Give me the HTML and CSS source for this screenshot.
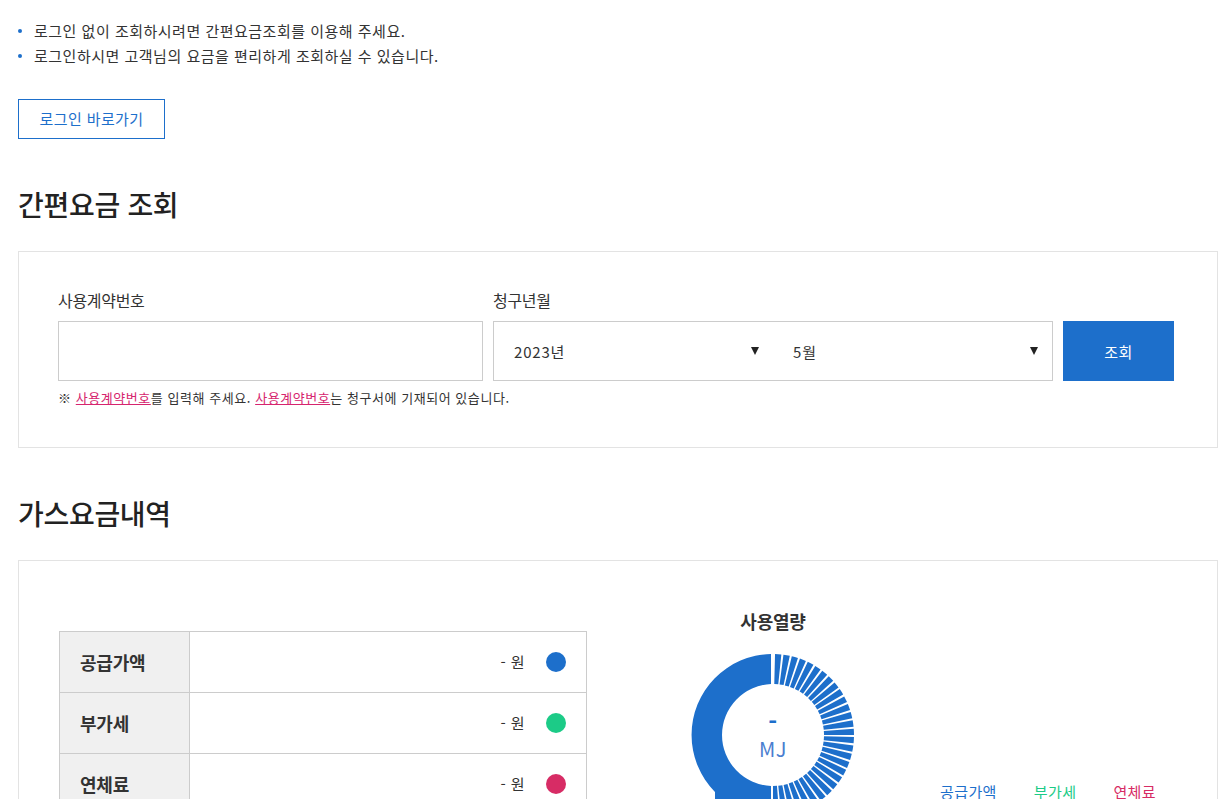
FILE: index.html
```html
<!DOCTYPE html>
<html lang="ko">
<head>
<meta charset="utf-8">
<title>간편요금 조회</title>
<link rel="stylesheet" href="styles.css">
</head>
<body>
<div class="page">
  <ul class="notice">
    <li>로그인 없이 조회하시려면 간편요금조회를 이용해 주세요.</li>
    <li>로그인하시면 고객님의 요금을 편리하게 조회하실 수 있습니다.</li>
  </ul>
  <a class="btn-outline" href="#">로그인 바로가기</a>

  <h2 class="sec-title">간편요금 조회</h2>
  <div class="box search-box">
    <div class="search-grid">
      <label class="field-label">사용계약번호</label>
      <label class="field-label">청구년월</label>
      <span></span>
      <input class="text-input" type="text">
      <div class="select-group">
        <div class="select"><span>2023년</span><i class="caret"></i></div>
        <div class="select"><span>5월</span><i class="caret"></i></div>
      </div>
      <button class="btn-primary" type="button">조회</button>
      <p class="note">※ <a href="#">사용계약번호</a>를 입력해 주세요. <a href="#">사용계약번호</a>는 청구서에 기재되어 있습니다.</p>
    </div>
  </div>

  <h2 class="sec-title">가스요금내역</h2>
  <div class="box result-box">
    <table class="fee-table">
      <tr><th>공급가액</th><td>- 원<span class="dot dot-blue"></span></td></tr>
      <tr><th>부가세</th><td>- 원<span class="dot dot-green"></span></td></tr>
      <tr><th>연체료</th><td>- 원<span class="dot dot-pink"></span></td></tr>
    </table>
    <div class="chart">
      <p class="chart-title">사용열량</p>
      <div class="donut">
        <svg width="200" height="200" viewBox="0 0 200 200">
          <path fill="#1d6fcb" d="M98 21 A81 81 0 0 0 98 182.97 L98 152.96 A51 51 0 0 1 98 51.04 Z"/>
          <rect x="42" y="157" width="56" height="43" fill="#1d6fcb"/>
          <path fill="none" stroke="#1d6fcb" stroke-width="30" stroke-dasharray="5.2 1.7" stroke-dashoffset="5.2" d="M100 36 A66 66 0 0 1 100 168"/>
        </svg>
        <div class="donut-label">
          <span class="donut-value">-</span>
          <span class="donut-unit">MJ</span>
        </div>
      </div>
    </div>
    <ul class="legend">
      <li class="lg-blue">공급가액</li>
      <li class="lg-green">부가세</li>
      <li class="lg-pink">연체료</li>
    </ul>
  </div>
</div>
</body>
</html>
```

FILE: styles.css
```css
* { box-sizing: border-box; }

body {
  margin: 0;
  font-family: "Noto Sans CJK KR", "Noto Sans", sans-serif;
  color: #333;
  background: #fff;
  letter-spacing: 0.5px;
}

.page {
  width: 1218px;
  padding: 18px 0 0 18px;
}

.notice {
  list-style: none;
  margin: 0;
  padding: 0;
}
.notice li {
  position: relative;
  padding-left: 16px;
  font-size: 15px;
  line-height: 25px;
}
.notice li::before {
  content: "";
  position: absolute;
  left: 0;
  top: 11px;
  width: 4px;
  height: 4px;
  border-radius: 50%;
  background: #1d6fcb;
}

.btn-outline {
  display: block;
  width: 147px;
  height: 40px;
  margin-top: 31px;
  border: 1px solid #1d6fcb;
  color: #1d6fcb;
  font-size: 15px;
  line-height: 38px;
  text-align: center;
  text-decoration: none;
  letter-spacing: 0.4px;
}

.sec-title {
  margin: 45px 0 27px;
  font-size: 28px;
  line-height: 40px;
  font-weight: 500;
  color: #222;
  letter-spacing: -0.3px;
}

.box {
  width: 1200px;
  border: 1px solid #e3e3e3;
}

.search-box {
  padding: 36px 0 39px 39px;
}
.search-grid {
  display: grid;
  grid-template-columns: 425px 560px 111px;
  column-gap: 10px;
}
.field-label {
  font-size: 16px;
  line-height: 24px;
  margin-bottom: 9px;
  color: #333;
  letter-spacing: -0.3px;
}
.text-input {
  height: 60px;
  border: 1px solid #ccc;
  margin: 0;
  font: inherit;
}
.select-group {
  display: flex;
  height: 60px;
  border: 1px solid #ccc;
}
.select {
  flex: 1;
  display: flex;
  align-items: center;
  justify-content: space-between;
  padding: 0 14px 0 20px;
  font-size: 15px;
  color: #333;
  letter-spacing: 0.8px;
}
.caret {
  width: 0;
  height: 0;
  border-left: 4.5px solid transparent;
  border-right: 4.5px solid transparent;
  border-top: 8px solid #222;
}
.btn-primary {
  height: 60px;
  border: 0;
  background: #1d6fcb;
  color: #fff;
  font-family: inherit;
  font-size: 15px;
  letter-spacing: 0.4px;
}
.note {
  grid-column: 1 / -1;
  margin: 7px 0 0;
  font-size: 13px;
  line-height: 20px;
  color: #333;
  letter-spacing: 0.55px;
}
.note a {
  color: #d6246e;
  text-decoration: underline;
}

.result-box {
  display: flex;
  align-items: flex-start;
  height: 420px;
  margin-top: 1px;
  padding: 48px 0 0 40px;
}

.fee-table {
  width: 528px;
  margin-top: 22px;
  border-collapse: collapse;
}
.fee-table th,
.fee-table td {
  height: 61px;
  border: 1px solid #ccc;
}
.fee-table th {
  width: 130px;
  padding: 0 0 0 20px;
  background: #f0f0f0;
  text-align: left;
  font-size: 18px;
  font-weight: 700;
  color: #333;
  letter-spacing: -0.2px;
}
.fee-table td {
  padding: 0 20px 0 0;
  text-align: right;
  font-size: 15px;
  color: #333;
  letter-spacing: 0.4px;
}
.dot {
  display: inline-block;
  width: 20px;
  height: 20px;
  margin-left: 21px;
  border-radius: 50%;
  vertical-align: middle;
  position: relative;
  top: -1px;
}
.dot-blue { background: #1d6fcb; }
.dot-green { background: #1ccb87; }
.dot-pink { background: #d72c65; }

.chart {
  width: 200px;
  margin-left: 86px;
}
.chart-title {
  margin: 0;
  font-size: 18px;
  line-height: 24px;
  font-weight: 700;
  text-align: center;
  color: #333;
  letter-spacing: -0.2px;
}
.donut {
  position: relative;
  height: 200px;
}
.donut svg {
  display: block;
}
.donut-label {
  position: absolute;
  left: 0;
  top: 75px;
  width: 200px;
  display: flex;
  flex-direction: column;
  align-items: center;
  color: #1d6fcb;
}
.donut-value {
  font-size: 24px;
  line-height: 26px;
  font-weight: 700;
}
.donut-unit {
  font-size: 20px;
  line-height: 30px;
  color: #4a7ed0;
}

.legend {
  display: flex;
  gap: 37px;
  list-style: none;
  margin: 172px 0 0 67px;
  padding: 0;
  font-size: 15px;
  line-height: 22px;
  letter-spacing: 0.4px;
}
.lg-blue { color: #1d6fcb; }
.lg-green { color: #1ccb87; }
.lg-pink { color: #d72c65; }
```
